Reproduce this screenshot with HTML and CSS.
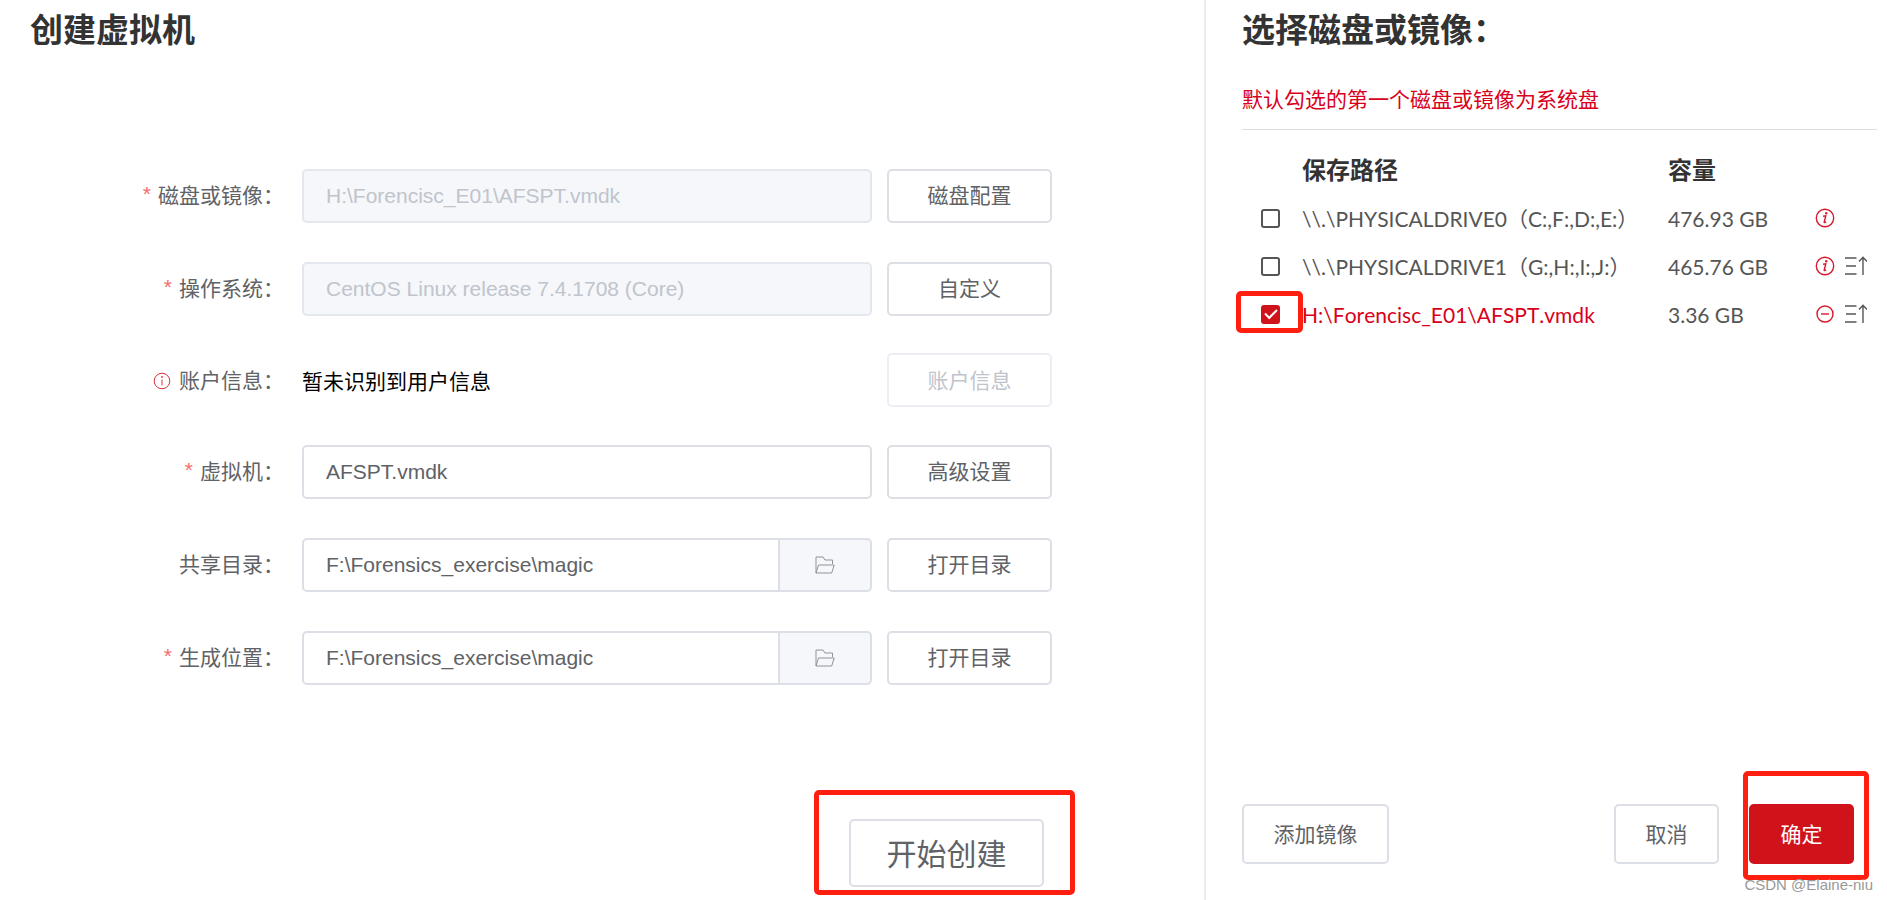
FILE: index.html
```html
<!DOCTYPE html>
<html lang="zh-CN">
<head>
    <meta charset="UTF-8">
    <meta name="viewport" content="width=device-width, initial-scale=1.0">
    <title>创建虚拟机</title>
    <link rel="stylesheet" href="styles.css">
</head>
<body>
    <svg class="defs" aria-hidden="true">
        <symbol id="folder" viewBox="0 0 20 18">
            <path d="M1 17V1h7l2 3h7.500v4M1 17l2.500-8h15.700l-2.500 8z"/>
        </symbol>
        <symbol id="info" viewBox="0 0 20 20">
            <circle cx="10" cy="10" r="8.700"/>
            <path d="M8 8.300l2.800-.5-1.600 6.200c-.2.900.6.900 1.900-.3"/>
            <circle class="dot" cx="11.200" cy="5.300" r="1.200"/>
        </symbol>
        <symbol id="info-thin" viewBox="0 0 18 18">
            <circle cx="9" cy="9" r="7.800"/>
            <path d="M9 7.500v6"/>
            <circle class="dot" cx="9" cy="5" r=".9"/>
        </symbol>
        <symbol id="minus" viewBox="0 0 20 20">
            <circle cx="10" cy="10" r="8"/>
            <path d="M6 10h8"/>
        </symbol>
        <symbol id="sort" viewBox="0 0 22 20">
            <path d="M0 2h11.500M1 10h10M0 18h11.500M18 19V1.500M14 5.500l4-4.300 4 4.300"/>
        </symbol>
    </svg>

    <main class="create">
        <h1>创建虚拟机</h1>
        <form class="form" id="vm-form">
            <div class="row">
                <label class="label required" for="disk">磁盘或镜像：</label>
                <input class="input" id="disk" type="text" value="H:\Forencisc_E01\AFSPT.vmdk" disabled>
                <button class="btn" type="button">磁盘配置</button>
            </div>
            <div class="row">
                <label class="label required" for="os">操作系统：</label>
                <input class="input" id="os" type="text" value="CentOS Linux release 7.4.1708 (Core)" disabled>
                <button class="btn" type="button">自定义</button>
            </div>
            <div class="row row-account">
                <span class="label"><svg class="icon-label"><use href="#info-thin"/></svg>账户信息：</span>
                <span class="account">暂未识别到用户信息</span>
                <button class="btn" type="button" disabled>账户信息</button>
            </div>
            <div class="row">
                <label class="label required" for="vm">虚拟机：</label>
                <input class="input" id="vm" type="text" value="AFSPT.vmdk">
                <button class="btn" type="button">高级设置</button>
            </div>
            <div class="row">
                <label class="label" for="share">共享目录：</label>
                <div class="group">
                    <input class="input" id="share" type="text" value="F:\Forensics_exercise\magic">
                    <button class="append" type="button" aria-label="选择共享目录"><svg><use href="#folder"/></svg></button>
                </div>
                <button class="btn" type="button">打开目录</button>
            </div>
            <div class="row">
                <label class="label required" for="target">生成位置：</label>
                <div class="group">
                    <input class="input" id="target" type="text" value="F:\Forensics_exercise\magic">
                    <button class="append" type="button" aria-label="选择生成位置"><svg><use href="#folder"/></svg></button>
                </div>
                <button class="btn" type="button">打开目录</button>
            </div>
        </form>
        <div class="start">
            <div class="marked mark-start">
                <button class="btn btn-start" type="submit" form="vm-form">开始创建</button>
            </div>
        </div>
    </main>

    <aside class="disks">
        <h1>选择磁盘或镜像：</h1>
        <p class="note">默认勾选的第一个磁盘或镜像为系统盘</p>
        <table>
            <thead>
                <tr>
                    <th class="col-check"></th>
                    <th>保存路径</th>
                    <th class="col-size">容量</th>
                    <th class="col-tools"></th>
                </tr>
            </thead>
            <tbody>
                <tr>
                    <td><div class="marked"><input type="checkbox" id="d0"></div></td>
                    <td><label for="d0">\\.\PHYSICALDRIVE0（C:,F:,D:,E:）</label></td>
                    <td>476.93 GB</td>
                    <td><div class="tools"><svg class="red"><use href="#info"/></svg></div></td>
                </tr>
                <tr>
                    <td><div class="marked"><input type="checkbox" id="d1"></div></td>
                    <td><label for="d1">\\.\PHYSICALDRIVE1（G:,H:,I:,J:）</label></td>
                    <td>465.76 GB</td>
                    <td><div class="tools"><svg class="red"><use href="#info"/></svg><svg class="sort"><use href="#sort"/></svg></div></td>
                </tr>
                <tr>
                    <td><div class="marked mark-check"><input type="checkbox" id="d2" checked></div></td>
                    <td class="picked"><label for="d2">H:\Forencisc_E01\AFSPT.vmdk</label></td>
                    <td>3.36 GB</td>
                    <td><div class="tools"><svg class="red"><use href="#minus"/></svg><svg class="sort"><use href="#sort"/></svg></div></td>
                </tr>
            </tbody>
        </table>
        <div class="actions">
            <button class="btn btn-tall" type="button">添加镜像</button>
            <button class="btn btn-tall cancel" type="button">取消</button>
            <div class="marked mark-ok">
                <button class="btn btn-tall btn-ok" type="button">确定</button>
            </div>
        </div>
        <span class="watermark">CSDN @Elaine-niu</span>
    </aside>
</body>
</html>
```

FILE: styles.css
```css
* {
    box-sizing: border-box;
}
body {
    margin: 0;
    min-height: 100vh;
    display: flex;
    background: #fff;
    color: #606266;
    font-family: "Liberation Sans", "Noto Sans CJK SC", sans-serif;
    font-size: 21px;
}
h1 {
    margin: 0;
    color: #333;
    font-size: 33px;
    line-height: 42px;
}
svg {
    fill: none;
    stroke: currentColor;
}
.defs {
    position: absolute;
    width: 0;
    height: 0;
}
.dot {
    fill: currentColor;
    stroke: none;
}

/* left side: the form */
.create {
    flex: 1;
    min-width: 0;
    padding: 10px 0 13px;
    display: flex;
    flex-direction: column;
}
.create h1 {
    padding-left: 30px;
}
.form {
    margin-top: 116px;
    padding-right: 152px;
    display: flex;
    flex-direction: column;
    gap: 38px;
}
.row {
    height: 55px;
    display: flex;
    align-items: center;
}
.row-account {
    height: 52px;
}
.label {
    width: 302px;
    padding: 0 18px 3px 0;
    flex: none;
    display: flex;
    justify-content: flex-end;
    align-items: center;
}
.required::before {
    content: "*";
    margin-right: 7px;
    color: #f56c6c;
}
.icon-label {
    width: 18px;
    height: 18px;
    margin: 4px 8px 0 0;
    color: #d9303e;
}
.input {
    flex: 1;
    min-width: 0;
    height: 54px;
    padding: 0 22px;
    border: 2px solid #dcdfe6;
    border-radius: 5px;
    background: #fff;
    color: #606266;
    font: inherit;
}
.input:disabled {
    border-color: #e4e7ed;
    background: #f5f7fa;
    color: #c0c4cc;
}
.account {
    flex: 1;
    color: #000;
}
.group {
    flex: 1;
    min-width: 0;
    display: flex;
}
.group .input {
    border-radius: 5px 0 0 5px;
}
.append {
    width: 92px;
    border: 2px solid #dcdfe6;
    border-left: 0;
    border-radius: 0 5px 5px 0;
    background: #f5f7fa;
    color: #909399;
}
.append svg {
    width: 20px;
    height: 18px;
    display: block;
    margin: auto;
}
.btn {
    width: 165px;
    height: 54px;
    padding: 0 0 3px;
    flex: none;
    border: 2px solid #dcdfe6;
    border-radius: 5px;
    background: #fff;
    color: #606266;
    font: inherit;
}
.row .btn {
    margin-left: 15px;
}
.btn:disabled {
    border-color: #ebeef5;
    color: #c0c4cc;
}
.start {
    margin-top: auto;
    padding-right: 160px;
    display: flex;
    justify-content: flex-end;
}
.btn-start {
    width: 195px;
    height: 68px;
    font-size: 30px;
}

/* red frames drawn over the page */
.marked {
    position: relative;
}
.marked::after {
    position: absolute;
    border: 5px solid #ff1f10;
    border-radius: 5px;
    pointer-events: none;
}
.mark-start::after {
    content: "";
    inset: -29px -31px -8px -35px;
}
.mark-check::after {
    content: "";
    inset: -14px -1px -9px -6px;
}
.mark-ok::after {
    content: "";
    inset: -33px -15px -16px -6px;
}

/* right side: list of disks */
.disks {
    position: relative;
    width: 683px;
    padding: 10px 10px 36px 36px;
    flex: none;
    display: flex;
    flex-direction: column;
    border-left: 2px solid #ebebeb;
}
.note {
    margin: 33px 0 16px;
    padding-bottom: 14px;
    border-bottom: 1px solid #ddd;
    color: #d9001b;
    line-height: 30px;
}
table {
    width: 100%;
    table-layout: fixed;
    border-collapse: collapse;
    color: #555;
    font-family: Lato, "Noto Sans CJK SC", sans-serif;
    font-kerning: none;
}
th, td {
    height: 48px;
    padding: 0;
    text-align: left;
    white-space: nowrap;
}
th {
    padding-bottom: 3px;
    color: #333;
    font-size: 24px;
}
.col-check {
    width: 60px;
}
.col-size {
    width: 147px;
}
.col-tools {
    width: 62px;
}
.picked {
    color: #d9001b;
}
input[type="checkbox"] {
    appearance: none;
    width: 19px;
    height: 19px;
    margin: 0 0 0 19px;
    display: grid;
    place-items: center;
    border: 2px solid #555;
    border-radius: 3px;
}
input[type="checkbox"]:checked {
    border-color: #d0121b;
    background: #d0121b;
}
input[type="checkbox"]:checked::after {
    content: "";
    width: 10px;
    height: 5px;
    margin-bottom: 3px;
    border: solid #fff;
    border-width: 0 0 2px 2px;
    transform: rotate(-45deg);
}
.tools {
    display: flex;
    align-items: center;
    gap: 10px;
}
.tools svg {
    width: 20px;
    height: 20px;
    stroke-width: 1.4;
}
.tools .sort {
    width: 22px;
}
.red {
    color: #d9192b;
}
.actions {
    margin-top: auto;
    padding-right: 23px;
    display: flex;
}
.btn-tall {
    width: 147px;
    height: 60px;
}
.cancel {
    width: 105px;
    margin: 0 30px 0 auto;
}
.btn-ok {
    width: 105px;
    border-color: #d0121b;
    background: #d0121b;
    color: #fff;
}
.watermark {
    position: absolute;
    right: 14px;
    bottom: 5px;
    color: #999;
    font-size: 15px;
    line-height: 20px;
}
```
